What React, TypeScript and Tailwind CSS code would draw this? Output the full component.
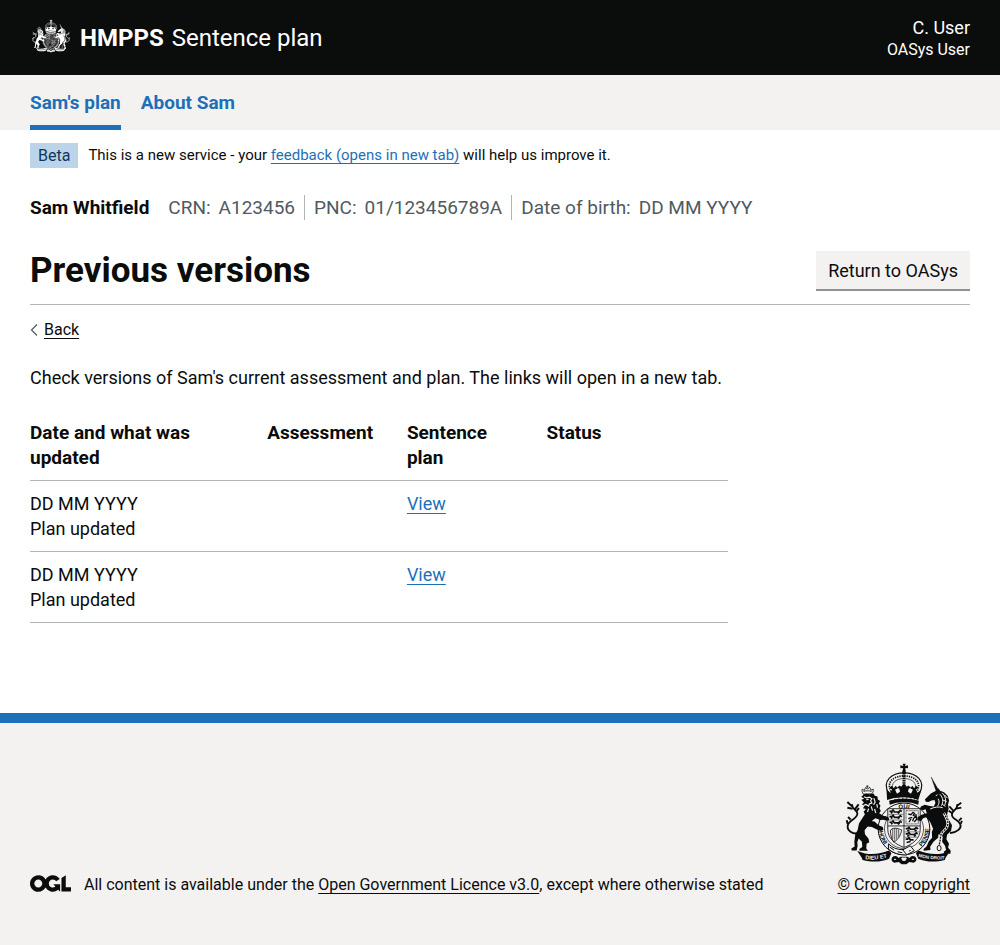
import type { ReactNode } from "react";

type CrestProps = { className: string; ground: string; lettered?: boolean };

function Crest({ className, ground, lettered = false }: CrestProps) {
  return (
    <svg viewBox="33 22 356 308" className={className} aria-hidden="true" focusable="false">
      <g fill="currentColor" stroke="none">
        {/* crown */}
        <path d="M207 24h9l-2 7 9-2v9l-8-1 1 9h-9l1-9-8 1v-9l9 2z" />
        <circle cx="211" cy="50" r="6" />
        <g fill="none" stroke="currentColor">
          <path d="M164 112C144 76 174 52 211 52s67 24 47 60" strokeWidth="3.5" />
          <path d="M172 108C156 80 180 61 211 61s55 19 39 47" strokeWidth="5" strokeDasharray="4 3" />
          <path d="M180 104C168 84 186 69 211 69s43 15 31 35" strokeWidth="2" />
          <path d="M211 52v44" strokeWidth="9" strokeDasharray="5 2" />
        </g>
        <path d="M158 102l12 10 5-10-8-5 7-6 6 7 6-7 6 7-8 5 6 12 9-6-2-9-7-3 8-7 4 4 9-9 9 9 4-4 8 7-7 3-2 9 9 6 6-12-8-5 6-7 6 7 6-7 7 6-8 5 5 10 12-10-10 32c-26-10-68-10-94 0z" />
        <path d="M166 136c25-10 65-10 90 0l-2 12c-24-10-62-10-86 0z" />
        <path d="M174 133c22-7 52-7 74 0" fill="none" stroke={ground} strokeWidth="3" strokeDasharray="7 5" />
        {/* garter */}
        <circle cx="211" cy="221" r="78" fill={ground} />
        <g fill="none" stroke="currentColor">
          <circle cx="211" cy="221" r="78" strokeWidth="3" />
          <circle cx="211" cy="221" r="59" strokeWidth="2" />
          {!lettered && <circle cx="211" cy="221" r="70" strokeWidth="12" strokeDasharray="6 4" />}
        </g>
        {lettered && (
          <g fontFamily="Liberation Sans, sans-serif" fontWeight="700" fontSize="18" textAnchor="middle">
            <path id="garter-top" d="M149 221a62 62 0 0 1 124 0" fill="none" />
            <path id="garter-left" d="M138 196a76 76 0 0 0 40 92" fill="none" />
            <path id="garter-right" d="M244 288a76 76 0 0 0 40-92" fill="none" />
            <text>
              <textPath href="#garter-top" startOffset="50%">QUI</textPath>
            </text>
            <text>
              <textPath href="#garter-left" startOffset="50%">HONI</textPath>
            </text>
            <text>
              <textPath href="#garter-right" startOffset="50%">PENSE</textPath>
            </text>
          </g>
        )}
        {/* shield */}
        <path d="M162 160h98v62c0 30-25 46-49 55-24-9-49-25-49-55z" fill={ground} stroke="currentColor" strokeWidth="2.5" />
        <path d="M211 160v116M162 212h98" stroke="currentColor" strokeWidth="2.5" />
        <g fill="none" stroke="currentColor" strokeWidth="5">
          <path d="M167 168h7l4-4 4 6h12l6-5 4 4M172 174l4-4M192 174l6-4" />
          <path d="M167 184h7l4-4 4 6h12l6-5 4 4M172 190l4-4M192 190l6-4" />
          <path d="M167 201h7l4-4 4 6h12l6-5 4 4M172 207l4-4M192 207l6-4" />
          <path d="M216 220h6l4-4 4 6h12l6-5 6 4M221 227l6-3M243 227l6-3" />
          <path d="M216 236h6l4-4 4 6h12l6-5 4 4M221 243l6-3M241 243l6-3" />
          <path d="M216 252h6l4-4 4 6h10M219 262l12-3" />
          <path d="M164 177h45M164 194h45M213 230h44M213 246h38" strokeWidth="1.5" />
          <rect x="217" y="166" width="37" height="40" strokeWidth="2" strokeDasharray="3 1" />
          <path d="M224 176l8 2 6-7 5 3-4 6 8 4-7 5-3 9M236 186l-12 4M232 191l-6 10M247 176l2 16-7 8" strokeWidth="4" />
          <path d="M170 225c12-12 26-3 34-1-3 15-9 29-24 37-6-10-10-20-10-36z" strokeWidth="2.5" />
          <path d="M177 220v32M183 219v38M189 220v32M195 223v22" strokeWidth="2" />
        </g>
        {/* buckle and strap */}
        <path
          d="M164 266c12 12 24 17 44 18l22-12 12 15-24 13c-22 0-40-6-54-18z"
          fill={ground}
          stroke="currentColor"
          strokeWidth="3"
        />
        <path d="M168 276l13 9M192 290l14 3M205 281l14 18M226 288l5-2" stroke="currentColor" strokeWidth="3" />
        {/* lion */}
        <path d="M88 116c-3-5-5-11-3-15l6 4 4-9 6 5 6-6 4 9 7-3c1 5-1 10-4 14z" fill={ground} stroke="currentColor" strokeWidth="2.5" />
        <path d="M89 108c8-3 16-3 24 0M100 98v-8M97 92h7" fill="none" stroke="currentColor" strokeWidth="2.5" />
        <path d="M86 118l10-3 12 1 11-2 4 7 8 2 1 9 7 5-4 7 5 7-3 8 4 8-5 7 12 7 9 2 8 4 1 8-9 1-9-3-9 1-14-5-9 6-4 11-12 9-8 10 1 12 11 14 2 10-8 5-1 14 5 7h-25l-1-5 9-6-1-16-10-10-4 11 1 12-3 13H53l-1-6 10-6-1-14 3-23 7-13 4-19 10-16 8-12-4-8 7-8-9-2 5-8-8-4 6-6-8-8 9-3-9-6 7-6z" />
        <path d="M109 197l13 2 12 11 13 5 2 9-9 3-14-6-12-6-13-1z" />
        <path
          d="M90 124l8 3 8-2 8 5-4 6 4 7-7 2-3 7-8-5-7 3M120 128l4 12-5 8M129 146l2 11M112 153l4 13M122 161l4 12M104 160l-3 10M97 133l7-1"
          fill="none"
          stroke={ground}
          strokeWidth="3.5"
        />
        <g fill="none" stroke="currentColor" strokeLinejoin="round">
          <path d="M74 234c-19 4-35-8-33-23 2-18 33-21 29-38-2-10-17-12-16-27" strokeWidth="5.5" />
          <path d="M54 153l-14-13M56 160l-16-3M62 163l12-16M67 168l8-10M41 206l-3-11M50 193l-8-8" strokeWidth="6" />
        </g>
        {/* unicorn */}
        <path d="M293 64l22 39-7 4z" stroke="currentColor" strokeWidth="1" />
        <path d="M309 105l6-7 5 8 12 4 11 11 4 14-3 12 2 13-5 17 4 14 11 19-3 17-12 12-2 13 8 14-3 11 8 10-1 9-18-1-2-5 7-5-3-13-9-12 2-15-15-9-13-13-10-23-12-14-8 2-9 9-10-2 1-9 12-8 16-4-4-12-8 3-9-4 3-8 12-5 15 4 12 1 5-11-3-8-9 1-9 5-8-1-3-7 8-8 10-10z" />
        <path d="M322 210l-6 20-2 18-14 12-10 15 1 10-20 2-1-5 9-8 7-16 10-10-1-18 8-20z" />
        <path
          d="M326 112c11 10 13 24 8 38M319 116c11 11 11 24 5 35M312 118l-5 3M314 130c5 8 3 16-2 23M333 118l9 10M328 134l12 4M326 146l10 7M290 161c12-6 26-8 38-4"
          fill="none"
          stroke={ground}
          strokeWidth="3"
        />
        <g fill="none" stroke="currentColor" strokeLinejoin="round">
          <path d="M350 234c22-3 36-15 31-27-5-16-29-15-25-32 3-12 18-12 16-29" strokeWidth="5.5" />
          <path d="M371 151l13-9M369 160l15-3M361 167l-13-14M357 174l-11-8M377 196l8-8M382 206l4-9" strokeWidth="5.5" />
        </g>
        <path
          d="M331 173c8 13 17 28 10 42-5 10-14 12-18 23-3 10-2 20-6 32"
          fill="none"
          stroke={ground}
          strokeWidth="8"
        />
        <path
          d="M331 173c8 13 17 28 10 42-5 10-14 12-18 23-3 10-2 20-6 32"
          fill="none"
          stroke="currentColor"
          strokeWidth="4"
          strokeDasharray="6 3"
        />
        <ellipse cx="317" cy="279" rx="6" ry="8" fill={ground} stroke="currentColor" strokeWidth="3" />
        {/* motto ribbons */}
        <path d="M70 288l23 7c28 4 50 0 72-9l8 8-7 17c-20 9-48 12-80 4l-3-8z" />
        <path d="M350 288l-23 7c-28 4-50 0-72-9l-8 8 7 17c20 9 48 12 80 4l3-8z" />
        {lettered ? (
          <g fill={ground} fontFamily="Liberation Sans, sans-serif" fontWeight="700" fontSize="17" textAnchor="middle">
            <path id="motto-left" d="M86 312c30 4 54 1 82-7" fill="none" />
            <path id="motto-right" d="M250 304c26 8 56 11 88 8" fill="none" />
            <text>
              <textPath href="#motto-left" startOffset="50%">DIEU ET</textPath>
            </text>
            <text fontSize="14">
              <textPath href="#motto-right" startOffset="50%">MON DROIT</textPath>
            </text>
          </g>
        ) : (
          <path d="M92 304c26 4 50 1 70-6M328 304c-26 4-50 1-70-6" fill="none" stroke={ground} strokeWidth="8" strokeDasharray="5 4" />
        )}
        {/* compartment */}
        <path d="M176 306c6-6 16-4 18 3l7-4h20l7 4c2-7 12-9 18-3 5 7 2 15-6 17l-13-2-9 7h-14l-9-7-13 2c-8-2-11-10-6-17z" />
        <path d="M181 313h6M235 313h6M204 309l3 7h8l3-7z" fill={ground} stroke={ground} strokeWidth="3" />
      </g>
    </svg>
  );
}

function OglLogo() {
  return (
    <svg viewBox="0 0 483.2 195.7" className="mb-[3px] h-[17px] w-[41px] shrink-0" aria-hidden="true" focusable="false">
      <path
        fill="currentColor"
        d="M421.5 142.8V.1l-50.7 32.3v161.1h112.4v-50.7zm-122.3-9.6A47.12 47.12 0 0 1 221 97.8c0-26 21.1-47.1 47.1-47.1 16.7 0 31.4 8.7 39.7 21.8l42.7-27.2A97.63 97.63 0 0 0 268.1 0c-36.5 0-68.3 20.1-85.1 49.7A98 98 0 0 0 97.8 0C43.9 0 0 43.9 0 97.8s43.9 97.8 97.8 97.8c36.5 0 68.3-20.1 85.1-49.7a97.76 97.76 0 0 0 149.6 25.4l19.4 22.2h3v-87.8h-80l24.3 27.5zM97.8 145c-26 0-47.1-21.1-47.1-47.1s21.1-47.1 47.1-47.1 47.1 21.1 47.1 47.1S123.8 145 97.8 145"
      />
    </svg>
  );
}

function TextLink({ className = "", children }: { className?: string; children: ReactNode }) {
  return (
    <a href="#" className={`underline decoration-1 underline-offset-3 ${className}`}>
      {children}
    </a>
  );
}

const details = [
  { label: "CRN:", value: "A123456" },
  { label: "PNC:", value: "01/123456789A" },
  { label: "Date of birth:", value: "DD MM YYYY" },
];

const versions = [
  { id: 1, date: "DD MM YYYY", change: "Plan updated" },
  { id: 2, date: "DD MM YYYY", change: "Plan updated" },
];

export default function App() {
  return (
    <div className="min-h-screen bg-[#f3f2f1] font-['Roboto','Liberation_Sans',sans-serif] text-[18px] leading-[25px] text-[#0b0c0c]">
      <header className="flex items-center justify-between bg-[#0b0c0c] px-[30px] py-[15px] text-white">
        <div className="flex items-center text-[24px] leading-7">
          <Crest className="mr-[10px] ml-[2px] mb-[3px] h-[34px] w-[38px]" ground="#0b0c0c" />
          <a href="#" className="mr-2 font-bold">HMPPS</a>
          <a href="#">Sentence plan</a>
        </div>
        <div className="text-right">
          <div>C. User</div>
          <div className="text-[16px] leading-5">OASys User</div>
        </div>
      </header>

      <nav aria-label="Primary navigation" className="bg-[#f3f2f1] px-[30px]">
        <ul className="flex gap-5 text-[19px] font-bold text-[#1d70b8]">
          <li>
            <a href="#" aria-current="page" className="block border-b-[5px] border-[#1d70b8] pt-[15px] pb-[10px]">Sam's plan</a>
          </li>
          <li>
            <a href="#" className="block pt-[15px] pb-[15px]">About Sam</a>
          </li>
        </ul>
      </nav>

      <div className="bg-white px-[30px] pt-[13px] pb-[90px]">
        <div className="flex items-center gap-[10px] text-[16px]">
          <strong className="bg-[#bbd4ea] px-2 font-normal text-[#0f385c]">Beta</strong>
          <span className="text-[15px]">
            This is a new service - your <TextLink className="text-[#1d70b8]">feedback (opens in new tab)</TextLink> will help us improve it.
          </span>
        </div>

        <div className="mt-[27px] flex flex-wrap items-center text-[19px]">
          <span className="mr-[10px] font-bold">Sam Whitfield</span>
          <dl className="flex flex-wrap divide-x divide-[#b1b4b6] text-[#505a5f]">
            {details.map((item) => (
              <div key={item.label} className="flex gap-2 px-[9px]">
                <dt>{item.label}</dt>
                <dd>{item.value}</dd>
              </div>
            ))}
          </dl>
        </div>

        <main>
          <div className="mt-[31px] flex items-start justify-between border-b border-[#b1b4b6] pb-[13px]">
            <h1 className="text-[35px] leading-10 font-bold">Previous versions</h1>
            <button type="button" className="border-b-2 border-[#929191] bg-[#f3f2f1] px-3 pt-[7px] pb-[6px]">
              Return to OASys
            </button>
          </div>

          <div className="mt-[15px] flex items-center gap-[6px] text-[16px] leading-5">
            <svg viewBox="0 0 8 12" className="h-3 w-2" aria-hidden="true">
              <path d="M7 .5 1.5 6 7 11.5" fill="none" stroke="#505a5f" strokeWidth="1.2" />
            </svg>
            <TextLink>Back</TextLink>
          </div>

          <div className="mt-[25px] max-w-[698px]">
            <p className="mb-5">Check versions of Sam's current assessment and plan. The links will open in a new tab.</p>
            <table className="w-full table-fixed border-collapse text-left">
              <thead>
                <tr className="border-b border-[#b1b4b6] align-top text-[19px]">
                  <th scope="col" className="w-[34%] py-[10px] pr-5 font-bold">Date and what was updated</th>
                  <th scope="col" className="w-[20%] py-[10px] pr-5 font-bold">Assessment</th>
                  <th scope="col" className="w-[20%] py-[10px] pr-5 font-bold">Sentence plan</th>
                  <th scope="col" className="w-[26%] py-[10px] font-bold">Status</th>
                </tr>
              </thead>
              <tbody>
                {versions.map((version) => (
                  <tr key={version.id} className="border-b border-[#b1b4b6] align-top">
                    <td className="py-[10px] pr-5">
                      {version.date}
                      <br />
                      {version.change}
                    </td>
                    <td />
                    <td className="py-[10px] pr-5">
                      <TextLink className="text-[#1d70b8]">View</TextLink>
                    </td>
                    <td />
                  </tr>
                ))}
              </tbody>
            </table>
          </div>
        </main>
      </div>

      <footer className="flex items-end justify-between gap-6 border-t-[10px] border-[#1d70b8] px-[30px] pt-10 pb-[50px] text-[16px] leading-5">
        <div className="flex items-center gap-[13px]">
          <OglLogo />
          <span>
            All content is available under the <TextLink>Open Government Licence v3.0</TextLink>, except where otherwise stated
          </span>
        </div>
        <div className="flex flex-col items-center gap-[10px]">
          <Crest className="h-[102px] w-[118px]" ground="#f3f2f1" lettered />
          <TextLink>© Crown copyright</TextLink>
        </div>
      </footer>
    </div>
  );
}
